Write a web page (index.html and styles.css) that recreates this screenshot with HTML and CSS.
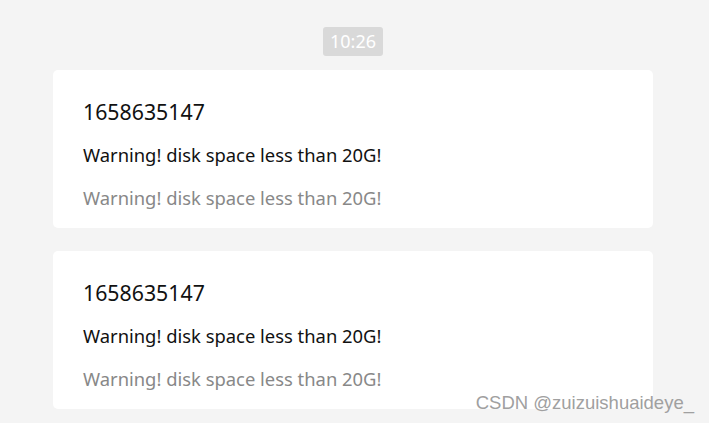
FILE: index.html
```html
<!DOCTYPE html>
<html lang="en">
<head>
<meta charset="utf-8">
<link rel="stylesheet" href="styles.css">
</head>
<body>
<div class="chat">
  <div class="time-row"><span class="time">10:26</span></div>
  <div class="card">
    <div class="title">1658635147</div>
    <div class="line">Warning! disk space less than 20G!</div>
    <div class="line muted">Warning! disk space less than 20G!</div>
  </div>
  <div class="card">
    <div class="title">1658635147</div>
    <div class="line">Warning! disk space less than 20G!</div>
    <div class="line muted">Warning! disk space less than 20G!</div>
  </div>
</div>
<div class="watermark">CSDN @zuizuishuaideye_</div>
</body>
</html>
```

FILE: styles.css
```css
html, body {
  margin: 0;
  padding: 0;
  background: #f4f4f4;
  height: 100%;
  overflow: hidden;
}
body {
  font-family: "Noto Sans", "Open Sans", sans-serif;
}
.chat {
  width: 600px;
  margin-left: 53px;
  padding-top: 27px;
  display: flex;
  flex-direction: column;
}
.time-row {
  display: flex;
  justify-content: center;
  margin-bottom: 14px;
}
.time {
  background: #d9d9d9;
  color: #ffffff;
  font-size: 18px;
  line-height: 29px;
  height: 29px;
  padding: 0 7px;
  border-radius: 3px;
}
.card {
  background: #ffffff;
  border-radius: 5px;
  padding: 21px 30px 9px;
  margin-bottom: 23px;
}
.title {
  font-size: 21.3px;
  line-height: 42px;
  color: #111;
}
.line {
  font-size: 18.4px;
  line-height: 42px;
  margin-top: 1px;
  color: #111;
}
.muted {
  color: #888888;
}
.watermark {
  position: absolute;
  right: 15px;
  bottom: 9px;
  font-family: "Liberation Sans", Arial, sans-serif;
  font-size: 18.5px;
  color: #a0a0a0;
}
```
